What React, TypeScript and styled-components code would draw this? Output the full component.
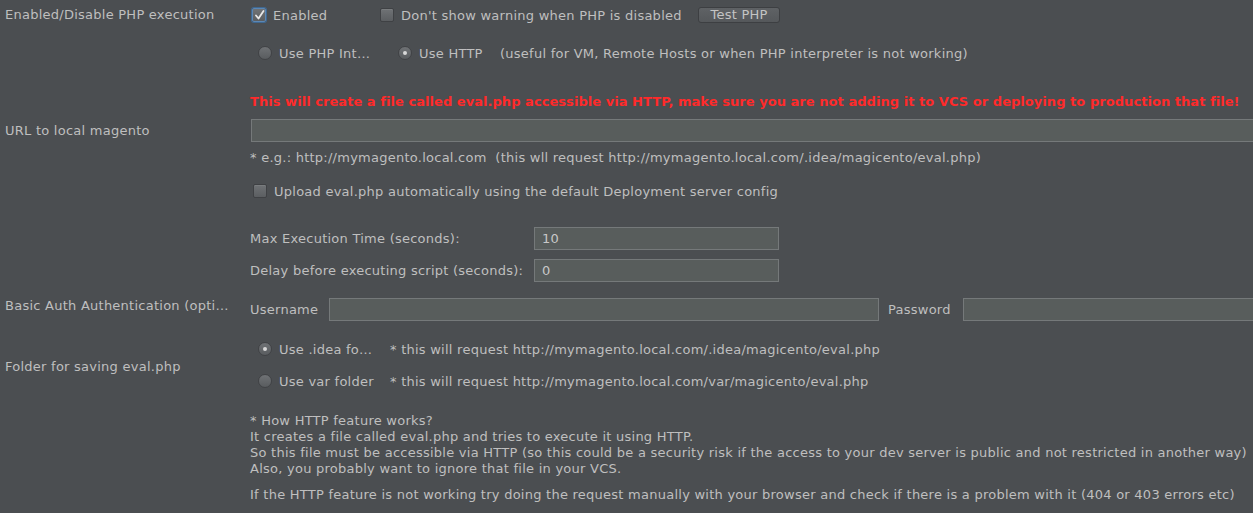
import React from "react";
import styled, { createGlobalStyle } from "styled-components";

const Global = createGlobalStyle`
  html, body { margin: 0; padding: 0; background: #4b4e51; }
  body { font-family: "DejaVu Sans", "Liberation Sans", sans-serif; font-size: 13px; letter-spacing: 0.25px; color: #bfbfbf; overflow: hidden; }
  #root { width: 1253px; height: 513px; overflow: hidden; }
`;

const Page = styled.div`
  width: 1253px;
  height: 513px;
  overflow: hidden;
  background: #4b4e51;
  padding-left: 5px;
  box-sizing: border-box;
  display: flex;
  flex-direction: column;
`;

const Row = styled.div<{ $mt: number; $h?: number }>`
  display: grid;
  grid-template-columns: 245px 1fr;
  margin-top: ${(p) => p.$mt}px;
  height: ${(p) => (p.$h ? `${p.$h}px` : "auto")};
  align-items: center;
  flex-shrink: 0;
`;

const Label = styled.div<{ $self?: string; $pt?: number }>`
  align-self: ${(p) => p.$self || "center"};
  padding-top: ${(p) => p.$pt || 0}px;
  line-height: 16px;
  white-space: nowrap;
`;

const Line = styled.div<{ $pl?: number }>`
  display: flex;
  align-items: center;
  padding-left: ${(p) => p.$pl || 0}px;
  white-space: nowrap;
  height: 100%;
`;

const Check = styled.span<{ $checked?: boolean }>`
  width: 14px;
  height: 14px;
  box-sizing: border-box;
  border-radius: 2px;
  display: inline-flex;
  align-items: center;
  justify-content: center;
  flex-shrink: 0;
  background: linear-gradient(#6f7275, #5b5e61);
  border: 1px solid ${(p) => (p.$checked ? "#5b87b5" : "#3f4144")};
  box-shadow: ${(p) => (p.$checked ? "0 0 0 1px #3f6891" : "inset 0 1px 0 rgba(255,255,255,0.08)")};
`;

const Radio = styled.span<{ $on?: boolean }>`
  width: 14px;
  height: 14px;
  box-sizing: border-box;
  border-radius: 50%;
  flex-shrink: 0;
  display: inline-flex;
  align-items: center;
  justify-content: center;
  background: linear-gradient(#6f7275, #595c5f);
  border: 1px solid #404245;
  &::after {
    content: "";
    width: 4px;
    height: 4px;
    border-radius: 50%;
    background: ${(p) => (p.$on ? "#d8d8d8" : "transparent")};
  }
`;

const Option = styled.label<{ $w?: number }>`
  display: inline-flex;
  align-items: center;
  gap: 7px;
  width: ${(p) => (p.$w ? `${p.$w}px` : "auto")};
  flex-shrink: 0;
`;

const Button = styled.button`
  height: 16px;
  width: 82px;
  padding: 0;
  border: 1px solid #3d3f42;
  border-radius: 3px;
  background: linear-gradient(#5f6265, #55585b);
  color: #c4c4c4;
  font-family: inherit;
  font-size: 13px;
  letter-spacing: 0.25px;
  line-height: 14px;
  box-sizing: border-box;
`;

const Input = styled.div<{ $w?: number; $grow?: boolean; $bleed?: boolean }>`
  height: 23px;
  box-sizing: border-box;
  border: 1px solid #75797a;
  background: #585d5c;
  color: #c8c8c8;
  padding: 0 7px;
  display: flex;
  align-items: center;
  width: ${(p) => (p.$w ? `${p.$w}px` : "auto")};
  flex: ${(p) => (p.$grow ? "1 1 auto" : "0 0 auto")};
  margin-right: ${(p) => (p.$bleed ? "-4px" : "0")};
`;

const Warning = styled.div`
  color: #ff2a2a;
  font-weight: bold;
  letter-spacing: 0.05px;
  white-space: nowrap;
  line-height: 16px;
`;

const FieldLabel = styled.span<{ $w: number; $pl?: number }>`
  width: ${(p) => p.$w}px;
  padding-left: ${(p) => p.$pl || 0}px;
  box-sizing: border-box;
  flex-shrink: 0;
`;

const Stack = styled.div<{ $gap: number }>`
  display: flex;
  flex-direction: column;
  gap: ${(p) => p.$gap}px;
`;

const RadioLine = styled(Line)`
  height: 20px;
`;

const Text = styled.div`
  line-height: 16px;
  white-space: nowrap;
`;

const CheckMark = () => (
  <svg width="11" height="11" viewBox="0 0 11 11">
    <path d="M2 5.5 L4.5 8.5 L9.5 1" fill="none" stroke="#e8e8e8" strokeWidth="1.8" strokeLinecap="round" strokeLinejoin="round" />
  </svg>
);

export default function App() {
  return (
    <>
      <Global />
      <Page>
        <Row $mt={3} $h={24}>
          <Label>Enabled/Disable PHP execution</Label>
          <Line $pl={2}>
            <Option $w={128}>
              <Check $checked>
                <CheckMark />
              </Check>
              Enabled
            </Option>
            <Option $w={318}>
              <Check />
              Don&apos;t show warning when PHP is disabled
            </Option>
            <Button>Test PHP</Button>
          </Line>
        </Row>
        <Row $mt={14} $h={24}>
          <span />
          <Line $pl={8}>
            <Option $w={140}>
              <Radio />
              Use PHP Int…
            </Option>
            <Option $w={102}>
              <Radio $on />
              Use HTTP
            </Option>
            <span>(useful for VM, Remote Hosts or when PHP interpreter is not working)</span>
          </Line>
        </Row>
        <Row $mt={27} $h={20}>
          <span />
          <Warning>
            This will create a file called eval.php accessible via HTTP, make sure you are not adding it to VCS or deploying to production that file!
          </Warning>
        </Row>
        <Row $mt={7} $h={23}>
          <Label>URL to local magento</Label>
          <Line $pl={1}>
            <Input $grow $bleed />
          </Line>
        </Row>
        <Row $mt={8} $h={16}>
          <span />
          <Text>
            * e.g.: http://mymagento.local.com&nbsp; (this wll request http://mymagento.local.com/.idea/magicento/eval.php)
          </Text>
        </Row>
        <Row $mt={15} $h={20}>
          <span />
          <Line $pl={3}>
            <Option>
              <Check />
              Upload eval.php automatically using the default Deployment server config
            </Option>
          </Line>
        </Row>
        <Row $mt={26} $h={23}>
          <span />
          <Line>
            <FieldLabel $w={284}>Max Execution Time (seconds):</FieldLabel>
            <Input $w={245}>10</Input>
          </Line>
        </Row>
        <Row $mt={9} $h={23}>
          <span />
          <Line>
            <FieldLabel $w={284}>Delay before executing script (seconds):</FieldLabel>
            <Input $w={245}>0</Input>
          </Line>
        </Row>
        <Row $mt={16} $h={23}>
          <Label $self="start">Basic Auth Authentication (opti…</Label>
          <Line>
            <FieldLabel $w={79}>Username</FieldLabel>
            <Input $w={550} />
            <FieldLabel $w={84} $pl={9}>Password</FieldLabel>
            <Input $grow $bleed />
          </Line>
        </Row>
        <Row $mt={18} $h={52}>
          <Label $pt={4}>Folder for saving eval.php</Label>
          <Stack $gap={12}>
            <RadioLine $pl={8}>
              <Option $w={132}>
                <Radio $on />
                Use .idea fo…
              </Option>
              <span>* this will request http://mymagento.local.com/.idea/magicento/eval.php</span>
            </RadioLine>
            <RadioLine $pl={8}>
              <Option $w={132}>
                <Radio />
                Use var folder
              </Option>
              <span>* this will request http://mymagento.local.com/var/magicento/eval.php</span>
            </RadioLine>
          </Stack>
        </Row>
        <Row $mt={22}>
          <span />
          <Stack $gap={10}>
            <div>
              <Text>* How HTTP feature works?</Text>
              <Text>It creates a file called eval.php and tries to execute it using HTTP.</Text>
              <Text>
                So this file must be accessible via HTTP (so this could be a security risk if the access to your dev server is public and not restricted in another way)
              </Text>
              <Text>Also, you probably want to ignore that file in your VCS.</Text>
            </div>
            <Text>
              If the HTTP feature is not working try doing the request manually with your browser and check if there is a problem with it (404 or 403 errors etc)
            </Text>
          </Stack>
        </Row>
      </Page>
    </>
  );
}
